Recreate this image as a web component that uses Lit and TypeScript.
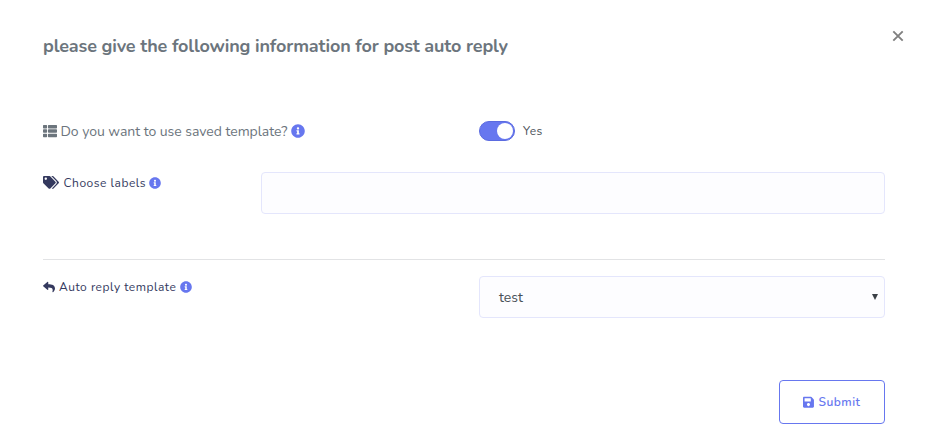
import { LitElement, html, css, svg } from "lit";
import { customElement, property, state } from "lit/decorators.js";

const icons: Record<string, { w: number; d: string }> = {
  list: { w: 512, d: "M149.333 216v80c0 13.255-10.745 24-24 24H24c-13.255 0-24-10.745-24-24v-80c0-13.255 10.745-24 24-24h101.333c13.255 0 24 10.745 24 24zM0 376v80c0 13.255 10.745 24 24 24h101.333c13.255 0 24-10.745 24-24v-80c0-13.255-10.745-24-24-24H24c-13.255 0-24 10.745-24 24zM125.333 32H24C10.745 32 0 42.745 0 56v80c0 13.255 10.745 24 24 24h101.333c13.255 0 24-10.745 24-24V56c0-13.255-10.745-24-24-24zm80 448H488c13.255 0 24-10.745 24-24v-80c0-13.255-10.745-24-24-24H205.333c-13.255 0-24 10.745-24 24v80c0 13.255 10.745 24 24 24zm-24-424v80c0 13.255 10.745 24 24 24H488c13.255 0 24-10.745 24-24V56c0-13.255-10.745-24-24-24H205.333c-13.255 0-24 10.745-24 24zm24 264H488c13.255 0 24-10.745 24-24v-80c0-13.255-10.745-24-24-24H205.333c-13.255 0-24 10.745-24 24v80c0 13.255 10.745 24 24 24z" },
  info: { w: 512, d: "M256 8C119.043 8 8 119.083 8 256c0 136.997 111.043 248 248 248s248-111.003 248-248C504 119.083 392.957 8 256 8zm0 110c23.196 0 42 18.804 42 42s-18.804 42-42 42-42-18.804-42-42 18.804-42 42-42zm56 254c0 6.627-5.373 12-12 12h-88c-6.627 0-12-5.373-12-12v-24c0-6.627 5.373-12 12-12h12v-64h-12c-6.627 0-12-5.373-12-12v-24c0-6.627 5.373-12 12-12h64c6.627 0 12 5.373 12 12v100h12c6.627 0 12 5.373 12 12v24z" },
  tags: { w: 640, d: "M497.941 225.941L286.059 14.059A48 48 0 0 0 252.118 0H48C21.49 0 0 21.49 0 48v204.118a48 48 0 0 0 14.059 33.941l211.882 211.882c18.744 18.745 49.136 18.746 67.882 0l204.118-204.118c18.745-18.745 18.745-49.137 0-67.882zM112 160c-26.51 0-48-21.49-48-48s21.49-48 48-48 48 21.49 48 48-21.49 48-48 48zm513.941 133.823L421.823 497.941c-18.745 18.745-49.137 18.745-67.882 0l-.36-.36L527.64 323.522c16.999-16.999 26.36-39.6 26.36-63.64s-9.362-46.641-26.36-63.64L331.397 0h48.721a48 48 0 0 1 33.941 14.059l211.882 211.882c18.745 18.745 18.745 49.137 0 67.882z" },
  reply: { w: 512, d: "M8.309 189.836L184.313 37.851C199.719 24.546 224 35.347 224 56.015v80.053c160.629 1.839 288 34.032 288 186.258 0 61.441-39.581 122.309-83.333 154.132-13.653 9.931-33.111-2.533-28.077-18.631 45.344-145.012-21.507-183.51-176.59-185.742V360c0 20.7-24.3 31.453-39.687 18.164l-176.004-152c-11.071-9.562-11.086-26.753 0-36.328z" },
  save: { w: 448, d: "M433.941 129.941l-83.882-83.882A48 48 0 0 0 316.118 32H48C21.49 32 0 53.49 0 80v352c0 26.51 21.49 48 48 48h352c26.51 0 48-21.49 48-48V163.882a48 48 0 0 0-14.059-33.941zM224 416c-35.346 0-64-28.654-64-64 0-35.346 28.654-64 64-64s64 28.654 64 64c0 35.346-28.654 64-64 64zm96-304.52V212c0 6.627-5.373 12-12 12H76c-6.627 0-12-5.373-12-12V108c0-6.627 5.373-12 12-12h228.52c3.183 0 6.235 1.264 8.485 3.515l3.48 3.48A11.996 11.996 0 0 1 320 111.48z" },
};

/** Glyph icon, one em tall, filled with the current text colour. */
@customElement("glyph-icon")
class GlyphIcon extends LitElement {
  @property() name = "info";
  static styles = css`
    :host { display: inline-flex; flex: none; }
    svg { display: block; height: 1em; fill: currentColor; }
  `;
  render() {
    const i = icons[this.name];
    return html`<svg viewBox="0 0 ${i.w} 512" aria-hidden="true">${svg`<path d=${i.d}></path>`}</svg>`;
  }
}

@customElement("app-root")
class AppRoot extends LitElement {
  @state() private useTemplate = true;

  static styles = css`
    :host {
      display: block;
      height: 437px;
      overflow: hidden;
      background: #fff;
      color: #6c757d;
      font-family: Nunito, "Noto Sans", sans-serif;
    }
    * { box-sizing: border-box; }
    .header {
      display: flex;
      justify-content: space-between;
      align-items: flex-start;
      height: 120px;
      padding: 30px 23px 0 43px;
    }
    .title {
      margin: 4px 0 0;
      font-size: 18px;
      line-height: 24px;
      font-weight: 700;
      letter-spacing: -0.14px;
      white-space: nowrap;
    }
    .close {
      display: flex;
      padding: 0;
      border: 0;
      background: none;
      color: #808080;
    }
    .close svg { width: 12px; height: 12px; }
    .body { padding: 0 42px 0 43px; }
    .row { display: grid; align-items: start; }
    .half { grid-template-columns: 436px 1fr; }
    .quarter { grid-template-columns: 218px 1fr; }
    .toggle-row { height: 52px; }
    .labels-row { height: 87px; }
    .label {
      display: flex;
      align-items: center;
      gap: 4px;
      height: 22px;
      font-size: 12px;
      color: #34395e;
      white-space: nowrap;
    }
    .label.large { gap: 3.5px; font-size: 14px; color: #6c757d; }
    .label .info { color: #6777ef; }
    .label.small { height: 21px; }
    .t1 { letter-spacing: -0.04px; }
    .t2, .t3, .yes, .submit { letter-spacing: 0.5px; }
    .tags { font-size: 12.8px; }
    .t2 { margin-left: 0.5px; }
    .t2 + .info { margin-left: -0.7px; }
    .switch { display: flex; align-items: center; gap: 8px; height: 22px; }
    .track {
      display: flex;
      align-items: center;
      justify-content: flex-end;
      width: 36px;
      height: 20px;
      padding: 1px;
      border: 1px solid #5b6be0;
      border-radius: 10px;
      background: #6777ef;
    }
    .track.off { justify-content: flex-start; background: #ccc; }
    .knob { width: 16px; height: 16px; border-radius: 50%; background: #fff; }
    .yes { font-size: 12px; color: #495057; }
    .field {
      display: flex;
      align-items: center;
      justify-content: space-between;
      height: 42px;
      padding: 0 6px 0 19px;
      border: 1px solid #e4e6fc;
      border-radius: 4px;
      background: #fdfdff;
      color: #495057;
      font-size: 14px;
    }
    .arrow {
      width: 6px;
      height: 6px;
      background: #3b4046;
      clip-path: polygon(0 0, 100% 0, 50% 100%);
    }
    .template-row {
      height: 121px;
      padding-top: 16px;
      border-top: 1px solid #e2e3e5;
    }
    .footer { display: flex; justify-content: flex-end; }
    .submit {
      display: flex;
      align-items: center;
      justify-content: center;
      gap: 4px;
      width: 106px;
      height: 44px;
      padding: 0;
      border: 1px solid #6777ef;
      border-radius: 4px;
      background: #fff;
      color: #6777ef;
      font-family: inherit;
      font-size: 12px;
      font-weight: 600;
    }
    .submit glyph-icon { font-size: 12.5px; }
  `;

  render() {
    return html`
      <div class="header">
        <h1 class="title">please give the following information for post auto reply</h1>
        <button class="close" aria-label="Close">
          <svg viewBox="0 0 12 12"><path d="M1.3 1.3l9.4 9.4M10.7 1.3l-9.4 9.4" stroke="currentColor" stroke-width="1.9"></path></svg>
        </button>
      </div>
      <div class="body">
        <div class="row half toggle-row">
          <div class="label large">
            <glyph-icon name="list"></glyph-icon><span class="t1">Do you want to use saved template?</span><glyph-icon class="info" name="info"></glyph-icon>
          </div>
          <div class="switch" @click=${() => (this.useTemplate = !this.useTemplate)}>
            <div class="track ${this.useTemplate ? "" : "off"}"><div class="knob"></div></div>
            <span class="yes">Yes</span>
          </div>
        </div>
        <div class="row quarter labels-row">
          <div class="label small">
            <glyph-icon class="tags" name="tags"></glyph-icon><span class="t2">Choose labels</span><glyph-icon class="info" name="info"></glyph-icon>
          </div>
          <div class="field"></div>
        </div>
        <div class="row half template-row">
          <div class="label small">
            <glyph-icon name="reply"></glyph-icon><span class="t3">Auto reply template</span><glyph-icon class="info" name="info"></glyph-icon>
          </div>
          <div class="field"><span>test</span><span class="arrow"></span></div>
        </div>
        <div class="footer">
          <button class="submit"><glyph-icon name="save"></glyph-icon><span>Submit</span></button>
        </div>
      </div>
    `;
  }
}
